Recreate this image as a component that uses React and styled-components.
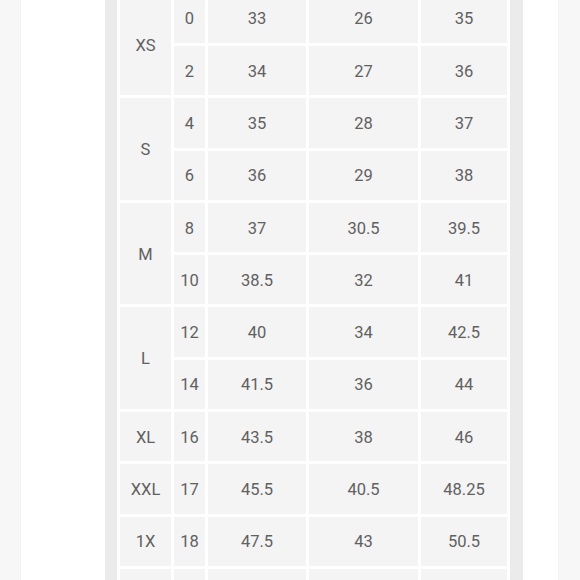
import { createGlobalStyle, styled } from 'styled-components';

const GlobalStyle = createGlobalStyle`
  html, body {
    margin: 0;
    padding: 0;
    background: #f7f7f7;
  }
`;

const groups = [
  { size: 'XS', rows: [['0', '33', '26', '35'], ['2', '34', '27', '36']] },
  { size: 'S', rows: [['4', '35', '28', '37'], ['6', '36', '29', '38']] },
  { size: 'M', rows: [['8', '37', '30.5', '39.5'], ['10', '38.5', '32', '41']] },
  { size: 'L', rows: [['12', '40', '34', '42.5'], ['14', '41.5', '36', '44']] },
  { size: 'XL', rows: [['16', '43.5', '38', '46']] },
  { size: 'XXL', rows: [['17', '45.5', '40.5', '48.25']] },
  { size: '1X', rows: [['18', '47.5', '43', '50.5']] },
  // next row is only peeking in at the bottom edge
  { size: '', rows: [['', '', '', '']] },
];

function App() {
  return (
    <>
      <GlobalStyle />
      <Page>
        <Sheet>
          <Frame>
            <Chart>
              {groups.map((g, gi) => (
                <Group key={gi}>
                  <SizeCell $span={g.rows.length}>{g.size}</SizeCell>
                  {g.rows.map((r, ri) =>
                    r.map((v, i) => <Cell key={ri + '-' + i}>{v}</Cell>)
                  )}
                </Group>
              ))}
            </Chart>
          </Frame>
        </Sheet>
      </Page>
    </>
  );
}

const Page = styled.div`
  height: 580px;
  overflow: hidden;
  padding-left: 21px;
  display: flex;
`;

const Sheet = styled.div`
  width: 453px;
  padding-left: 84px;
  background: #ffffff;
  box-shadow: 0 0 1px rgba(0, 0, 0, 0.08);
  display: flex;
`;

const Frame = styled.div`
  width: 393px;
  padding: 0 13px 0 12px;
  background: #ebebeb;
`;

const Chart = styled.div`
  margin-top: -9.3px;
  padding: 3px;
  background: #ffffff;
  display: grid;
  grid-template-columns: 51px 31px 98px 109px 86px;
  grid-auto-rows: 49.3px;
  gap: 3px;
  font-family: Roboto, 'Noto Sans', sans-serif;
  font-size: 16.5px;
  color: #616161;
`;

const Group = styled.div`
  display: contents;
`;

const Cell = styled.div`
  background: #f4f4f4;
  display: flex;
  align-items: center;
  justify-content: center;
  padding-top: 1px;
`;

const SizeCell = styled(Cell)`
  grid-column: 1;
  grid-row: span ${(p) => p.$span};
`;

export default App;
